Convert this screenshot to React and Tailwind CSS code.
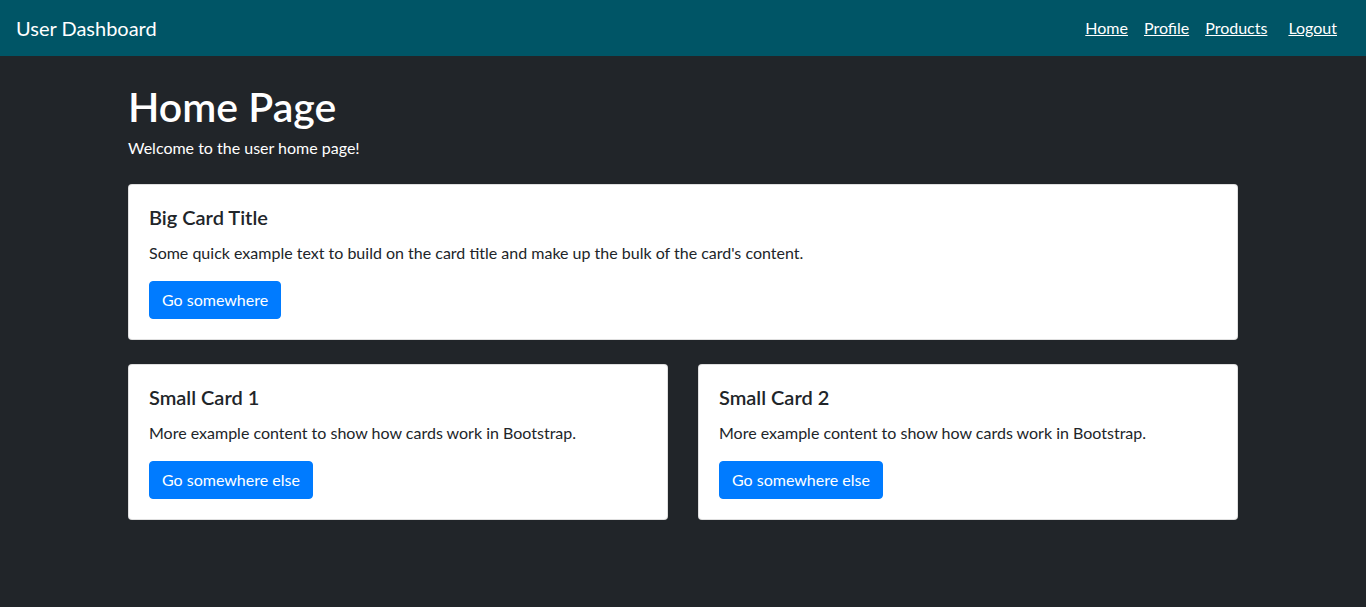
import React from 'react';

const font = { fontFamily: 'Lato, "Noto Sans", Arial, sans-serif' };

const Card = ({ title, text, button, className = '' }) => (
  <div className={`bg-white border border-black/[0.125] rounded-[4px] p-5 ${className}`}>
    <h5 className="text-[20px] leading-[1.2] font-semibold text-[#212529] mb-3">{title}</h5>
    <p className="text-base leading-6 text-[#212529] mb-4">{text}</p>
    <button className="bg-[#007bff] text-white text-base leading-6 px-3 py-[6px] rounded-[4px] border border-[#007bff]">
      {button}
    </button>
  </div>
);

const App = () => {
  return (
    <div className="min-h-screen bg-[#212529]" style={font}>
      <nav className="h-14 bg-[#005566] flex items-center justify-between px-4">
        <a className="text-white text-[20px] leading-[30px]">User Dashboard</a>
        <div className="flex items-center text-white text-base">
          <a className="px-2 underline">Home</a>
          <a className="px-2 underline">Profile</a>
          <a className="px-2 underline">Products</a>
          <a className="ml-[13px] mr-[13px] underline">Logout</a>
        </div>
      </nav>

      <div className="w-[1140px] mx-auto px-[15px] pt-6">
        <h1 className="text-white text-[41px] leading-[48px] font-semibold pt-[3px] mb-[5px]">Home Page</h1>
        <p className="text-white text-base leading-6 mb-6">Welcome to the user home page!</p>

        <Card
          className="mb-6"
          title="Big Card Title"
          text="Some quick example text to build on the card title and make up the bulk of the card's content."
          button="Go somewhere"
        />

        <div className="grid grid-cols-2 gap-[30px]">
          <Card
            title="Small Card 1"
            text="More example content to show how cards work in Bootstrap."
            button="Go somewhere else"
          />
          <Card
            title="Small Card 2"
            text="More example content to show how cards work in Bootstrap."
            button="Go somewhere else"
          />
        </div>
      </div>
    </div>
  );
};

export default App;
